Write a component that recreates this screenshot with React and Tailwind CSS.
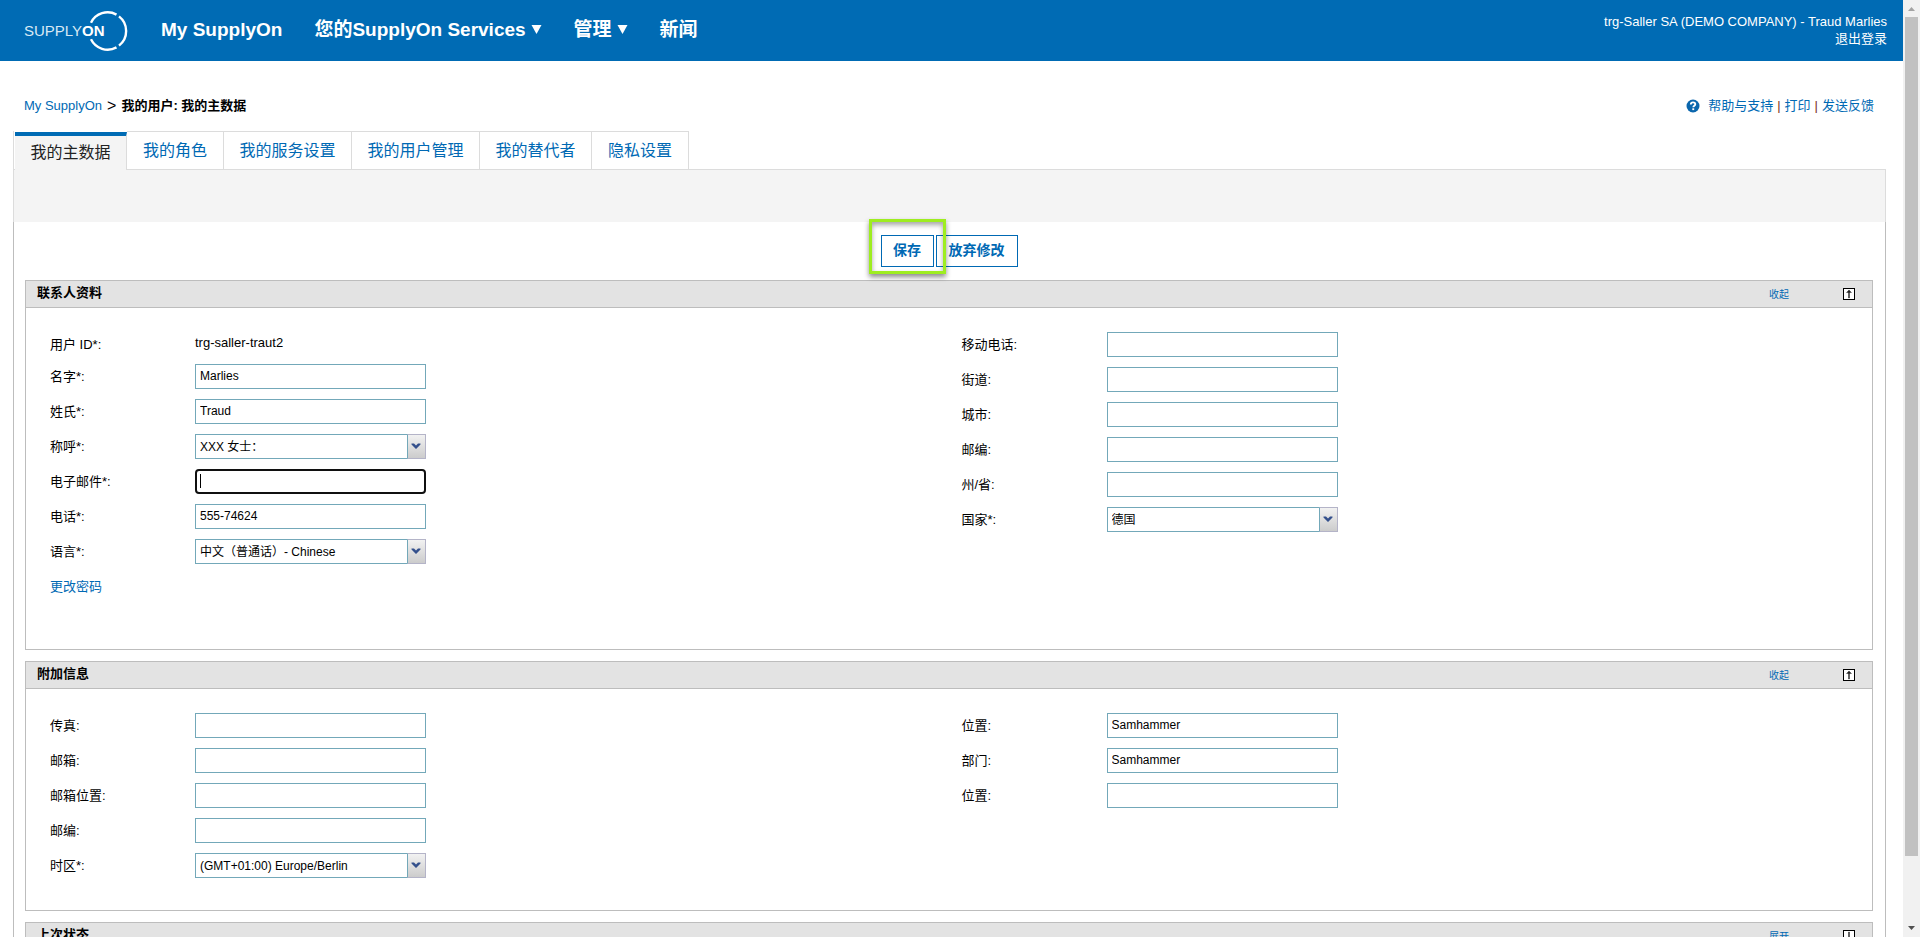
import { useState } from "react";

const navItems = [
  { label: "My SupplyOn", menu: false },
  { label: "您的SupplyOn Services", menu: true },
  { label: "管理", menu: true },
  { label: "新闻", menu: false },
];

const tabs = [
  { label: "我的角色", width: "w-[97px]" },
  { label: "我的服务设置", width: "w-32" },
  { label: "我的用户管理", width: "w-32" },
  { label: "我的替代者", width: "w-28" },
  { label: "隐私设置", width: "w-[97px]" },
];

const contactLeft = [
  { id: "firstName", label: "名字*:", value: "Marlies" },
  { id: "lastName", label: "姓氏*:", value: "Traud" },
  { id: "salutation", label: "称呼*:", value: "XXX 女士：", type: "select" },
  { id: "email", label: "电子邮件*:", value: "", active: true },
  { id: "phone", label: "电话*:", value: "555-74624" },
  { id: "language", label: "语言*:", value: "中文（普通话）- Chinese", type: "select" },
];

const contactRight = [
  { id: "mobile", label: "移动电话:", value: "" },
  { id: "street", label: "街道:", value: "" },
  { id: "city", label: "城市:", value: "" },
  { id: "zip", label: "邮编:", value: "" },
  { id: "state", label: "州/省:", value: "" },
  { id: "country", label: "国家*:", value: "德国", type: "select" },
];

const extraLeft = [
  { id: "fax", label: "传真:", value: "" },
  { id: "poBox", label: "邮箱:", value: "" },
  { id: "poBoxCity", label: "邮箱位置:", value: "" },
  { id: "poBoxZip", label: "邮编:", value: "" },
  { id: "timezone", label: "时区*:", value: "(GMT+01:00) Europe/Berlin", type: "select" },
];

const extraRight = [
  { id: "position", label: "位置:", value: "Samhammer" },
  { id: "department", label: "部门:", value: "Samhammer" },
  { id: "location", label: "位置:", value: "" },
];

function Logo() {
  return (
    <svg width="106" height="44" viewBox="0 0 106 44" role="img" aria-label="SupplyOn">
      <g fill="none" stroke="#fff" strokeWidth="2.4">
        <path d="M67 13.7 A18.5 18.5 0 0 1 92.5 5.6" />
        <path d="M95 7.4 A18.5 18.5 0 0 1 95 36.6" />
        <path d="M67 30.3 A18.5 18.5 0 0 0 92.5 38.4" />
      </g>
      <text x="0" y="27" fill="#d9e9f4" fontSize="15" fontFamily="Liberation Sans, sans-serif">
        SUPPLY
        <tspan fill="#fff" fontWeight="700">ON</tspan>
      </text>
    </svg>
  );
}

function Header() {
  return (
    <header className="flex h-[61px] items-center bg-[#006bb4] pr-4 pl-6 text-white">
      <Logo />
      <nav className="ml-[31px] flex gap-8 text-[19px] font-bold">
        {navItems.map((item) => (
          <a key={item.label} href="#" className="flex items-center gap-[5px] whitespace-nowrap">
            {item.label}
            {item.menu && (
              <svg width="11" height="10" viewBox="0 0 11 10" fill="#fff" className="mb-1" aria-hidden="true">
                <path d="M0.5 1h10L5.5 10z" />
              </svg>
            )}
          </a>
        ))}
      </nav>
      <div className="ml-auto pb-0.5 text-right text-[13px] leading-[17px]">
        <p>trg-Saller SA (DEMO COMPANY) - Traud Marlies</p>
        <a href="#">退出登录</a>
      </div>
    </header>
  );
}

function Breadcrumb() {
  return (
    <div className="flex h-[70px] items-center justify-between pt-5 pr-[29px] pl-6 text-[13px]">
      <div className="flex items-center gap-[5px]">
        <a href="#" className="text-[#0069b4]">My SupplyOn</a>
        <span className="text-base leading-5">&gt;</span>
        <span className="font-bold">我的用户: 我的主数据</span>
      </div>
      <div className="flex items-center gap-1 text-[#0069b4]">
        <svg width="14" height="14" viewBox="0 0 14 14" className="mr-1" aria-hidden="true">
          <circle cx="7" cy="7" r="6.5" fill="#0a66ad" />
          <path
            d="M4.8 5.6C4.8 4.2 5.7 3.4 7 3.4s2.3.8 2.3 1.9c0 1.5-2 1.5-2 3"
            fill="none"
            stroke="#fff"
            strokeWidth="1.8"
          />
          <rect x="6.3" y="9.3" width="1.9" height="1.8" fill="#fff" />
        </svg>
        <a href="#">帮助与支持</a>
        <span className="text-[#7a2c20]">|</span>
        <a href="#">打印</a>
        <span className="text-[#7a2c20]">|</span>
        <a href="#">发送反馈</a>
      </div>
    </div>
  );
}

function Tabs() {
  return (
    <nav className="flex h-[39px] border-b border-l border-[#dcdcdc] pl-px text-base">
      <a
        href="#"
        className="mt-px -mb-px flex w-28 items-center justify-center border-t-4 border-r border-t-[#006bb4] border-r-[#dcdcdc] bg-[#f4f4f4] text-[#222]"
      >
        我的主数据
      </a>
      {tabs.map((tab) => (
        <a
          key={tab.label}
          href="#"
          className={`${tab.width} flex items-center justify-center border-t border-r border-[#dcdcdc] text-[#0069b4]`}
        >
          {tab.label}
        </a>
      ))}
    </nav>
  );
}

function Field({ field }) {
  return (
    <div className="flex h-[25px] items-center">
      <label htmlFor={field.id} className="w-[145px] pt-px text-[13px]">
        {field.label}
      </label>
      <div className="relative w-[231px] text-xs">
        {field.type === "select" ? (
          <>
            <select
              id={field.id}
              defaultValue={field.value}
              className="block h-[25px] w-full appearance-none border border-[#73a8b9] bg-white pr-5 pl-1 outline-none"
            >
              <option>{field.value}</option>
            </select>
            <span className="pointer-events-none absolute inset-y-0 right-0 flex w-[19px] items-center justify-center border border-[#b4b4c8] border-l-[#73a8b9] bg-linear-to-b from-[#f2f2f2] to-[#cccccc] pr-px">
              <svg width="10" height="7" viewBox="0 0 10 7" aria-hidden="true">
                <path d="M0.5 0.5H3L5 2.5L7 0.5H9.5V1.5L5 6L0.5 1.5Z" fill="#34508c" />
              </svg>
            </span>
          </>
        ) : (
          <input
            id={field.id}
            type="text"
            defaultValue={field.value}
            className={
              field.active
                ? "block h-[25px] w-full rounded-[4px] border-2 border-[#101010] bg-white px-1 outline-none"
                : "block h-[25px] w-full border border-[#73a8b9] bg-white px-1 pb-px outline-none"
            }
          />
        )}
        {field.active && <span className="absolute top-[5px] left-[5px] h-[14px] w-px bg-black" />}
      </div>
    </div>
  );
}

function Section({ title, open, onToggle, children }) {
  return (
    <section className="mb-[11px] border border-[#bdbdbd]">
      <div className="flex h-[26px] items-center bg-[#e3e3e3] pr-[17px] pl-[11px]">
        <h2 className="pb-0.5 text-[13px] font-bold">{title}</h2>
        <button
          type="button"
          onClick={onToggle}
          className="ml-auto flex items-center gap-[54px] text-[10px] text-[#0069b4]"
        >
          {open ? "收起" : "展开"}
          <svg width="12" height="12" viewBox="0 0 12 12" aria-hidden="true">
            <rect x="0.5" y="0.5" width="11" height="11" fill="#fff" stroke="#000" />
            <path
              d={open ? "M5.5 10V3h1v7zM3.5 4.5L6 2l2.5 2.5z" : "M5.5 2v7h1V2zM3.5 7.5L6 10l2.5-2.5z"}
              fill="#222"
              stroke="#222"
              strokeWidth="0.4"
            />
          </svg>
        </button>
      </div>
      {open && (
        <div className="grid grid-cols-2 gap-x-px border-t border-[#bdbdbd] pt-6 pl-6">{children}</div>
      )}
    </section>
  );
}

function Scrollbar() {
  return (
    <div className="flex w-[17px] shrink-0 flex-col items-center bg-[#f1f1f1]" aria-hidden="true">
      <svg width="17" height="17" viewBox="0 0 17 17">
        <path d="M5 11L8.5 7L12 11z" fill="#a3a3a3" />
      </svg>
      <div className="w-[13px] flex-[839] bg-[#c1c1c1]" />
      <div className="flex-[64]" />
      <svg width="17" height="17" viewBox="0 0 17 17">
        <path d="M5 6L8.5 10L12 6z" fill="#505050" />
      </svg>
    </div>
  );
}

export default function App() {
  const [open, setOpen] = useState({ contact: true, extra: true, status: false });

  const toggle = (key) => setOpen({ ...open, [key]: !open[key] });

  return (
    <div className="flex h-screen overflow-hidden bg-white font-['Liberation_Sans','Noto_Sans_CJK_SC',sans-serif] text-black">
      <div className="min-w-0 flex-1 overflow-hidden">
        <Header />
        <Breadcrumb />

        <main className="mr-[17px] ml-[13px]">
          <Tabs />
          <div className="h-[52px] border-x border-[#dcdcdc] bg-[#f4f4f4]" />

          <form className="border-x border-[#bdbdbd] pr-3 pl-[11px]" onSubmit={(e) => e.preventDefault()}>
            {/* Actions */}
            <div className="flex justify-center gap-[2px] py-[13px] text-sm font-bold text-[#0069b4]">
              <div className="relative">
                <button type="submit" className="h-8 w-[53px] border border-[#0069b4] bg-white pb-0.5">
                  保存
                </button>
                <span className="pointer-events-none absolute -inset-x-3 -top-4 -bottom-[7px] z-10 border-3 border-[#9eed20] shadow-[0_3px_5px_rgba(0,0,0,0.45),inset_0_3px_5px_rgba(0,0,0,0.35)]" />
              </div>
              <button type="reset" className="h-8 w-[82px] border border-[#0069b4] bg-white pb-0.5">
                放弃修改
              </button>
            </div>

            <Section title="联系人资料" open={open.contact} onToggle={() => toggle("contact")}>
              <div className="flex flex-col gap-[10px] pb-[50px]">
                <div className="flex h-[22px] items-center text-[13px]">
                  <span className="w-[145px] pt-1">用户 ID*:</span>
                  <span>trg-saller-traut2</span>
                </div>
                {contactLeft.map((field) => (
                  <Field key={field.id} field={field} />
                ))}
                <div className="flex h-[25px] items-center text-[13px]">
                  <a href="#" className="text-[#0069b4]">更改密码</a>
                </div>
              </div>
              <div className="flex flex-col gap-[10px]">
                {contactRight.map((field) => (
                  <Field key={field.id} field={field} />
                ))}
              </div>
            </Section>

            <Section title="附加信息" open={open.extra} onToggle={() => toggle("extra")}>
              <div className="flex flex-col gap-[10px] pb-8">
                {extraLeft.map((field) => (
                  <Field key={field.id} field={field} />
                ))}
              </div>
              <div className="flex flex-col gap-[10px]">
                {extraRight.map((field) => (
                  <Field key={field.id} field={field} />
                ))}
              </div>
            </Section>

            <Section title="上次状态" open={open.status} onToggle={() => toggle("status")} />
          </form>
        </main>
      </div>
      <Scrollbar />
    </div>
  );
}
